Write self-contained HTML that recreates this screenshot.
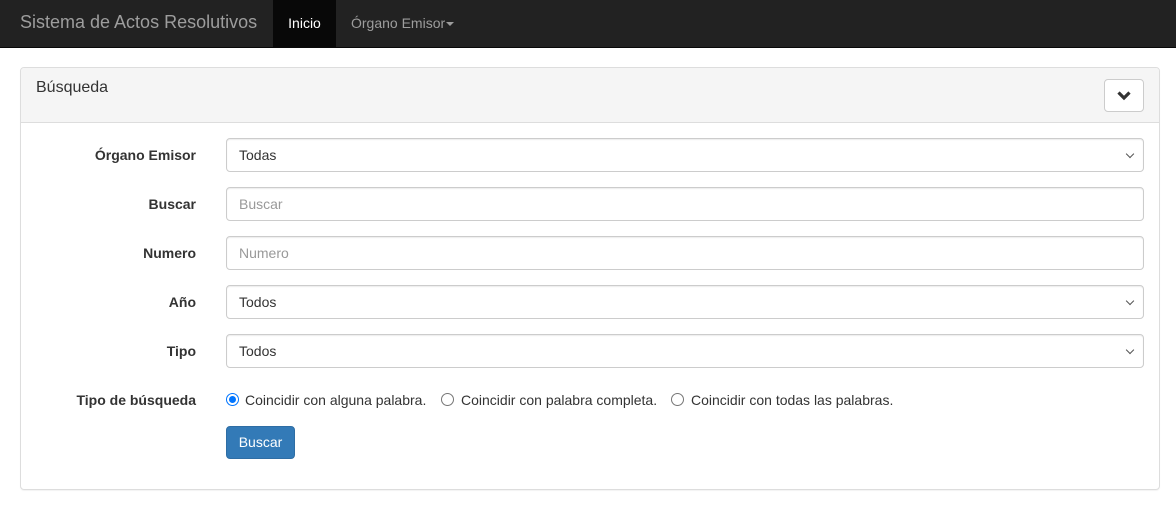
<!DOCTYPE html>
<html><head><meta charset="utf-8"><style>
*{box-sizing:border-box;margin:0;padding:0}
body{width:1176px;height:505px;background:#fff;font-family:"Liberation Sans",Arial,sans-serif;font-size:14px;color:#333;position:relative;overflow:hidden}
.nav{position:absolute;left:0;top:0;width:1176px;height:48px;background:#222;border-bottom:1px solid #080808}
.brand{position:absolute;left:20px;top:12px;font-size:18px;color:#9d9d9d}
.act{position:absolute;left:273px;top:0;width:63px;height:47px;background:#080808;color:#fff;text-align:center;line-height:46px}
.org{position:absolute;left:351px;top:0;line-height:46px;color:#9d9d9d}
.caret{display:inline-block;border-top:4px solid #9d9d9d;border-left:4px solid transparent;border-right:4px solid transparent;vertical-align:middle;margin-left:1px}
.panel{position:absolute;left:20px;top:67px;width:1140px;height:423px;border:1px solid #ddd;border-radius:4px;box-shadow:0 1px 1px rgba(0,0,0,.05)}
.ph{height:55px;background:#f5f5f5;border-bottom:1px solid #ddd;border-radius:3px 3px 0 0}
.ph span{position:absolute;left:15px;top:11px;font-size:16px}
.tb{position:absolute;left:1083px;top:11px;width:40px;height:33px;background:#fff;border:1px solid #ccc;border-radius:4px}
.lbl{position:absolute;right:980px;font-weight:bold;width:200px;text-align:right}
.in{position:absolute;left:226px;width:918px;height:34px;border:1px solid #ccc;border-radius:4px;padding:0 12px;line-height:32px;box-shadow:inset 0 1px 1px rgba(0,0,0,.075)}
.ph2{color:#999}
.sel::after{content:"";position:absolute;right:10px;top:12px;width:5px;height:5px;border-right:1.2px solid #555;border-bottom:1.2px solid #555;transform:rotate(45deg)}
.r{position:absolute;top:393px;width:13px;height:13px;border:1px solid #767676;border-radius:50%}
.rt{position:absolute;top:392px}
.btn{position:absolute;left:226px;top:426px;width:69px;height:33px;background:#337ab7;border:1px solid #2e6da4;border-radius:4px;color:#fff;text-align:center;line-height:31px}
</style></head><body>
<div class="nav"><div class="brand">Sistema de Actos Resolutivos</div><div class="act">Inicio</div><div class="org">Órgano Emisor<span class="caret"></span></div></div>
<div class="panel"><div class="ph"><span>Búsqueda</span>
<div class="tb"><svg width="38" height="31" viewBox="0 0 38 31"><path d="M13.5 12.5 L19 18 L24.5 12.5" fill="none" stroke="#333" stroke-width="3.2"/></svg></div></div></div>
<div class="lbl" style="top:147px">Órgano Emisor</div>
<div class="in sel" style="top:138px">Todas</div>
<div class="lbl" style="top:196px">Buscar</div>
<div class="in ph2" style="top:187px">Buscar</div>
<div class="lbl" style="top:245px">Numero</div>
<div class="in ph2" style="top:236px">Numero</div>
<div class="lbl" style="top:294px">Año</div>
<div class="in sel" style="top:285px">Todos</div>
<div class="lbl" style="top:343px">Tipo</div>
<div class="in sel" style="top:334px">Todos</div>
<div class="lbl" style="top:392px">Tipo de búsqueda</div>
<div class="r" style="left:226px;border:1px solid #0075ff"><div style="margin:2px;width:7px;height:7px;border-radius:50%;background:#0075ff"></div></div>
<div class="rt" style="left:245px">Coincidir con alguna palabra.</div>
<div class="r" style="left:441px"></div>
<div class="rt" style="left:461px">Coincidir con palabra completa.</div>
<div class="r" style="left:671px"></div>
<div class="rt" style="left:691px">Coincidir con todas las palabras.</div>
<div class="btn">Buscar</div>
</body></html>
